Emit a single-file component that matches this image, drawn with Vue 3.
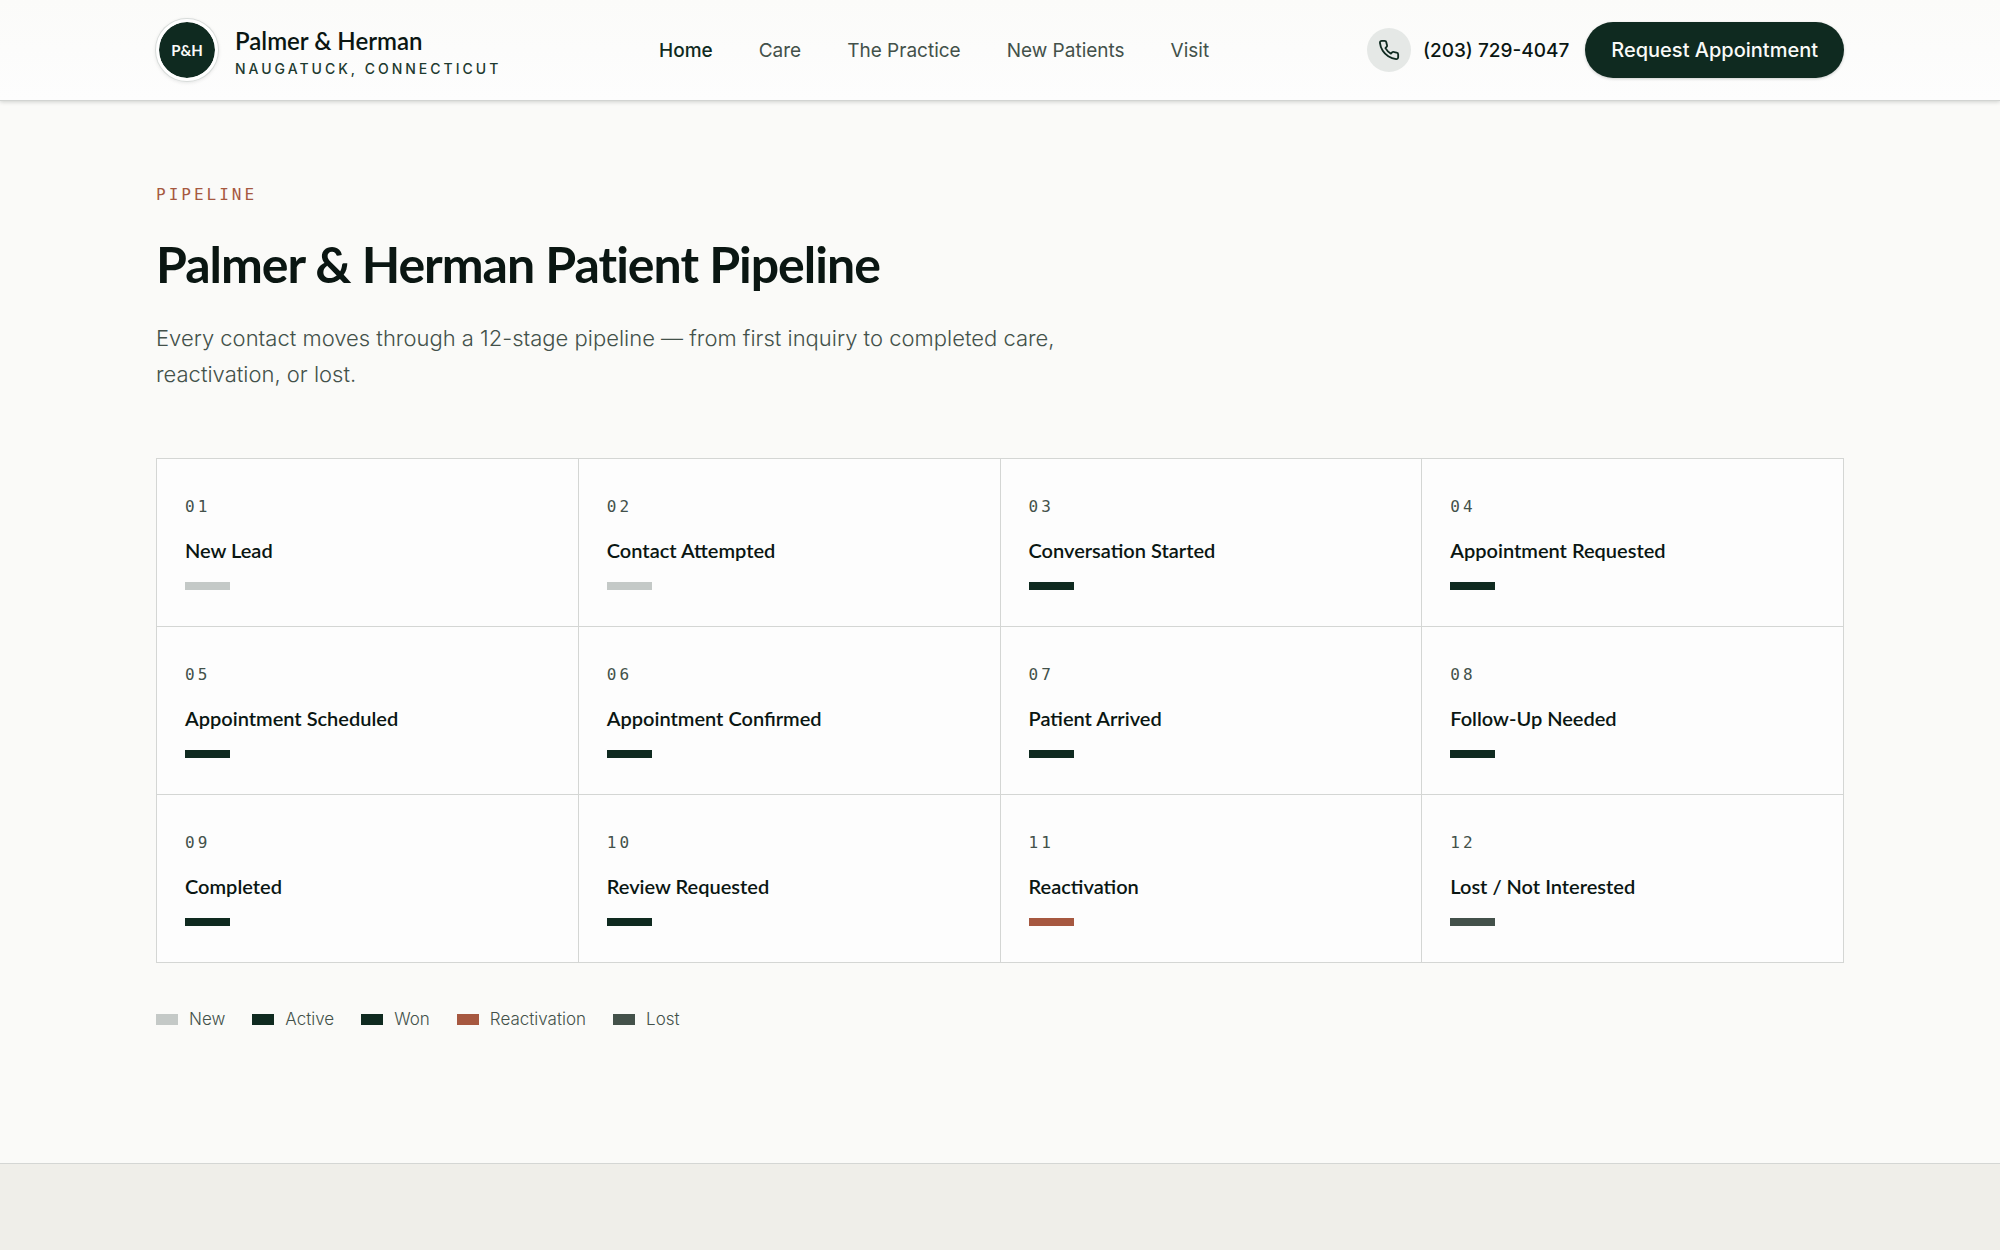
<script setup>
const links = ['Home', 'Care', 'The Practice', 'New Patients', 'Visit']

const stages = [
  { name: 'New Lead',              kind: 'new' },
  { name: 'Contact Attempted',     kind: 'new' },
  { name: 'Conversation Started',  kind: 'active' },
  { name: 'Appointment Requested', kind: 'active' },
  { name: 'Appointment Scheduled', kind: 'active' },
  { name: 'Appointment Confirmed', kind: 'active' },
  { name: 'Patient Arrived',       kind: 'active' },
  { name: 'Follow-Up Needed',      kind: 'active' },
  { name: 'Completed',             kind: 'won' },
  { name: 'Review Requested',      kind: 'won' },
  { name: 'Reactivation',          kind: 'reactivation' },
  { name: 'Lost / Not Interested', kind: 'lost' },
]

const legend = [
  { label: 'New',          kind: 'new' },
  { label: 'Active',       kind: 'active' },
  { label: 'Won',          kind: 'won' },
  { label: 'Reactivation', kind: 'reactivation' },
  { label: 'Lost',         kind: 'lost' },
]

const pad = n => String(n).padStart(2, '0')
</script>

<template>
  <div class="page">
    <header class="topbar">
      <div class="wrap topbar-row">
        <a href="#" class="brand">
          <span class="brand-mark">P&amp;H</span>
          <span class="brand-text">
            <span class="brand-name">Palmer &amp; Herman</span>
            <span class="brand-place">Naugatuck, Connecticut</span>
          </span>
        </a>

        <nav class="nav">
          <a v-for="(l, i) in links" :key="l" href="#" :class="{ current: i === 0 }">{{ l }}</a>
        </nav>

        <div class="actions">
          <a href="tel:+12037294047" class="phone">
            <span class="phone-icon">
              <svg width="22" height="22" viewBox="0 0 24 24" fill="none" stroke="currentColor" stroke-width="2" stroke-linecap="round" stroke-linejoin="round">
                <path d="M22 16.92v3a2 2 0 0 1-2.18 2 19.79 19.79 0 0 1-8.63-3.07 19.5 19.5 0 0 1-6-6 19.79 19.79 0 0 1-3.07-8.67A2 2 0 0 1 4.11 2h3a2 2 0 0 1 2 1.72 12.84 12.84 0 0 0 .7 2.81 2 2 0 0 1-.45 2.11L8.09 9.91a16 16 0 0 0 6 6l1.27-1.27a2 2 0 0 1 2.11-.45 12.84 12.84 0 0 0 2.81.7A2 2 0 0 1 22 16.92z" />
              </svg>
            </span>
            (203) 729-4047
          </a>
          <button type="button" class="cta">Request Appointment</button>
        </div>
      </div>
    </header>

    <main class="pipeline">
      <div class="wrap">
        <p class="eyebrow">Pipeline</p>
        <h1>Palmer &amp; Herman Patient Pipeline</h1>
        <p class="lead">
          Every contact moves through a 12-stage pipeline — from first inquiry to completed care,
          reactivation, or lost.
        </p>

        <ol class="grid">
          <li v-for="(s, i) in stages" :key="s.name" class="stage">
            <span class="num">{{ pad(i + 1) }}</span>
            <span class="stage-name">{{ s.name }}</span>
            <span :class="['bar', s.kind]"></span>
          </li>
        </ol>

        <ul class="legend">
          <li v-for="k in legend" :key="k.kind">
            <span :class="['swatch', k.kind]"></span>{{ k.label }}
          </li>
        </ul>
      </div>
    </main>

    <section class="next"></section>
  </div>
</template>

<style>
body { margin: 0; background: #fafaf8; }
</style>

<style scoped>
.page {
  min-height: 100vh; display: flex; flex-direction: column;
  font-family: Inter, "Liberation Sans", sans-serif; color: #0a1612;
}
.wrap { max-width: 1688px; margin: 0 auto; }
a { color: inherit; text-decoration: none; }
ol, ul { list-style: none; margin: 0; padding: 0; }

.topbar {
  position: relative; padding: 0 24px;
  background: linear-gradient(#fbfbf9, #fdfdfd);
  border-bottom: 1px solid #d2d4d2;
  box-shadow: 0 1px 4px rgba(10,22,18,.18);
}
.topbar-row { height: 100px; display: flex; align-items: center; justify-content: space-between; }

.brand { display: flex; align-items: center; gap: 17px; }
.brand-mark {
  width: 56px; height: 56px; border-radius: 50%; border: 3px solid #fff;
  display: flex; align-items: center; justify-content: center;
  background: #0f2a20; background-clip: padding-box; color: #fafaf8;
  font: 700 15px Lato, sans-serif;
  box-shadow: 0 0 0 1px #d8dcda, 0 1px 4px rgba(10,22,18,.14);
}
.brand-text { display: flex; flex-direction: column; padding-top: 8px; }
.brand-name { font: 600 24px/30px Lato, sans-serif; }
.brand-place {
  font-size: 14px; line-height: 26px; font-weight: 500; color: #1d3a2f;
  letter-spacing: 3px; text-transform: uppercase;
}

.nav { display: flex; gap: 46px; font-size: 19px; color: #43514a; }
.nav .current { color: #0f2a20; font-weight: 500; }

.actions { display: flex; align-items: center; gap: 16px; font-size: 19px; }
.phone { display: flex; align-items: center; gap: 12px; font-weight: 500; }
.phone-icon {
  width: 44px; height: 44px; border-radius: 50%; background: #e5e8e6; color: #0f2a20;
  display: flex; align-items: center; justify-content: center;
}
.cta {
  height: 56px; padding: 0 26px; border: 0; border-radius: 28px;
  background: #0f2a20; color: #fafaf8; font: inherit; font-size: 20px; font-weight: 500;
  box-shadow: 0 1px 3px rgba(10,22,18,.2);
}

.pipeline { padding: 80px 24px 132px; }
.eyebrow {
  margin: 0; font: 16px/28px "DejaVu Sans Mono", monospace; color: #a65840;
  letter-spacing: 3px; text-transform: uppercase;
}
h1 { margin: 23px 0 24px; font: 700 50px/64px Lato, sans-serif; letter-spacing: -1px; }
.lead {
  margin: 0 0 66px; max-width: 920px;
  font-size: 22px; line-height: 36px; font-weight: 300; color: #43514a;
}

.grid {
  display: grid; grid-template-columns: repeat(4, 1fr); gap: 1px;
  background: #d4d6d4; border: 1px solid #d4d6d4;
}
.stage { display: flex; flex-direction: column; padding: 36px 28px; background: #fdfdfd; }
.num {
  margin-bottom: 18px; color: #43514a; letter-spacing: 3px;
  font: 16px/24px "DejaVu Sans Mono", monospace;
}
.stage-name { margin-bottom: 18px; font: 600 20px/27px Lato, sans-serif; }
.bar { width: 45px; height: 8px; }

.legend { display: flex; flex-wrap: wrap; gap: 27px; margin-top: 44px; }
.legend li {
  display: flex; align-items: center; gap: 11px;
  font-size: 17px; line-height: 24px; font-weight: 300; color: #43514a;
}
.swatch { width: 22px; height: 11px; }

.new          { background: #c4c9c7; }
.active, .won { background: #0f2a20; }
.reactivation { background: #a65840; }
.lost         { background: #43514a; }

.next { flex: 1; background: #efeee9; border-top: 1px solid #d4d6d4; }
</style>
